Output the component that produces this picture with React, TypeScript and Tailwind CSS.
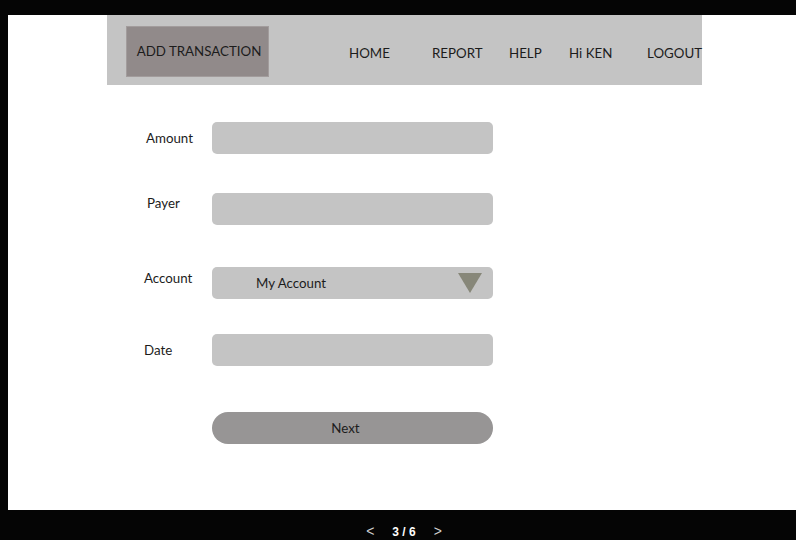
export default function App() {
  const nav = [
    { label: "HOME", w: "w-[83px]" },
    { label: "REPORT", w: "w-[77px]" },
    { label: "HELP", w: "w-[60px]" },
    { label: "Hi KEN", w: "w-[78px]" },
    { label: "LOGOUT", w: "w-[56px]" },
  ]

  return (
    <div className="w-[796px] h-[540px] bg-[#050505] flex flex-col overflow-hidden font-['Lato','Liberation_Sans',sans-serif] text-[#1c1c1c]">
      <div className="pt-[15px] pl-[8px]">
        <div className="h-[495px] bg-white">
          {/* top bar */}
          <div className="ml-[99px] w-[595px] h-[70px] bg-[#c4c4c4] flex">
            <div className="mt-[11px] ml-[19px] w-[145px] h-[51px] bg-[#918a8a] border border-[#a29c9c] flex items-center justify-center text-[13.3px] pl-[3px]">
              ADD TRANSACTION
            </div>
            <div className="flex items-center ml-[79px] pt-[8px] text-[13.3px]">
              {nav.map((item) => (
                <div key={item.label} className={`${item.w} whitespace-nowrap pl-[1px]`}>
                  {item.label}
                </div>
              ))}
            </div>
          </div>

          {/* form */}
          <div className="ml-[136px] mt-[37px] flex flex-col text-[13.3px]">
            <div className="flex">
              <div className="w-[68px] pl-[2px] pt-[6px] leading-5">Amount</div>
              <div className="w-[281px] h-[32px] rounded-[5px] bg-[#c4c4c4]" />
            </div>
            <div className="flex mt-[39px]">
              <div className="w-[68px] pl-[3px] pt-0 leading-5">Payer</div>
              <div className="w-[281px] h-[32px] rounded-[5px] bg-[#c4c4c4]" />
            </div>
            <div className="flex mt-[42px]">
              <div className="w-[68px] pt-[1px] leading-5">Account</div>
              <div className="w-[281px] h-[32px] rounded-[5px] bg-[#c4c4c4] flex items-center pl-[44px] pr-[11px]">
                <span className="flex-1 pt-[2px]">My Account</span>
                <svg width="24" height="20" viewBox="0 0 24 20">
                  <polygon points="0,0 24,0 12,20" fill="#878779" />
                </svg>
              </div>
            </div>
            <div className="flex mt-[35px]">
              <div className="w-[68px] pt-[6px] leading-5">Date</div>
              <div className="w-[281px] h-[32px] rounded-[5px] bg-[#c4c4c4]" />
            </div>
            <div className="flex mt-[46px]">
              <div className="w-[68px]" />
              <button className="w-[281px] h-[32px] rounded-full bg-[#979595] flex items-center justify-center pr-[14px] pt-[2px] text-[13.3px]">
                Next
              </button>
            </div>
          </div>
        </div>
      </div>

      {/* slide pager */}
      <div className="flex-1 flex justify-center pt-[14px] pl-[12px] text-[12px] leading-[14px] text-white font-bold font-['Liberation_Sans',sans-serif]">
        <div className="flex items-start gap-[18px]">
          <span className="font-normal text-[14px] text-[#cfcfcf]">&lt;</span>
          <span className="pt-[1px]">3 / 6</span>
          <span className="font-normal text-[14px] text-[#cfcfcf]">&gt;</span>
        </div>
      </div>
    </div>
  )
}
